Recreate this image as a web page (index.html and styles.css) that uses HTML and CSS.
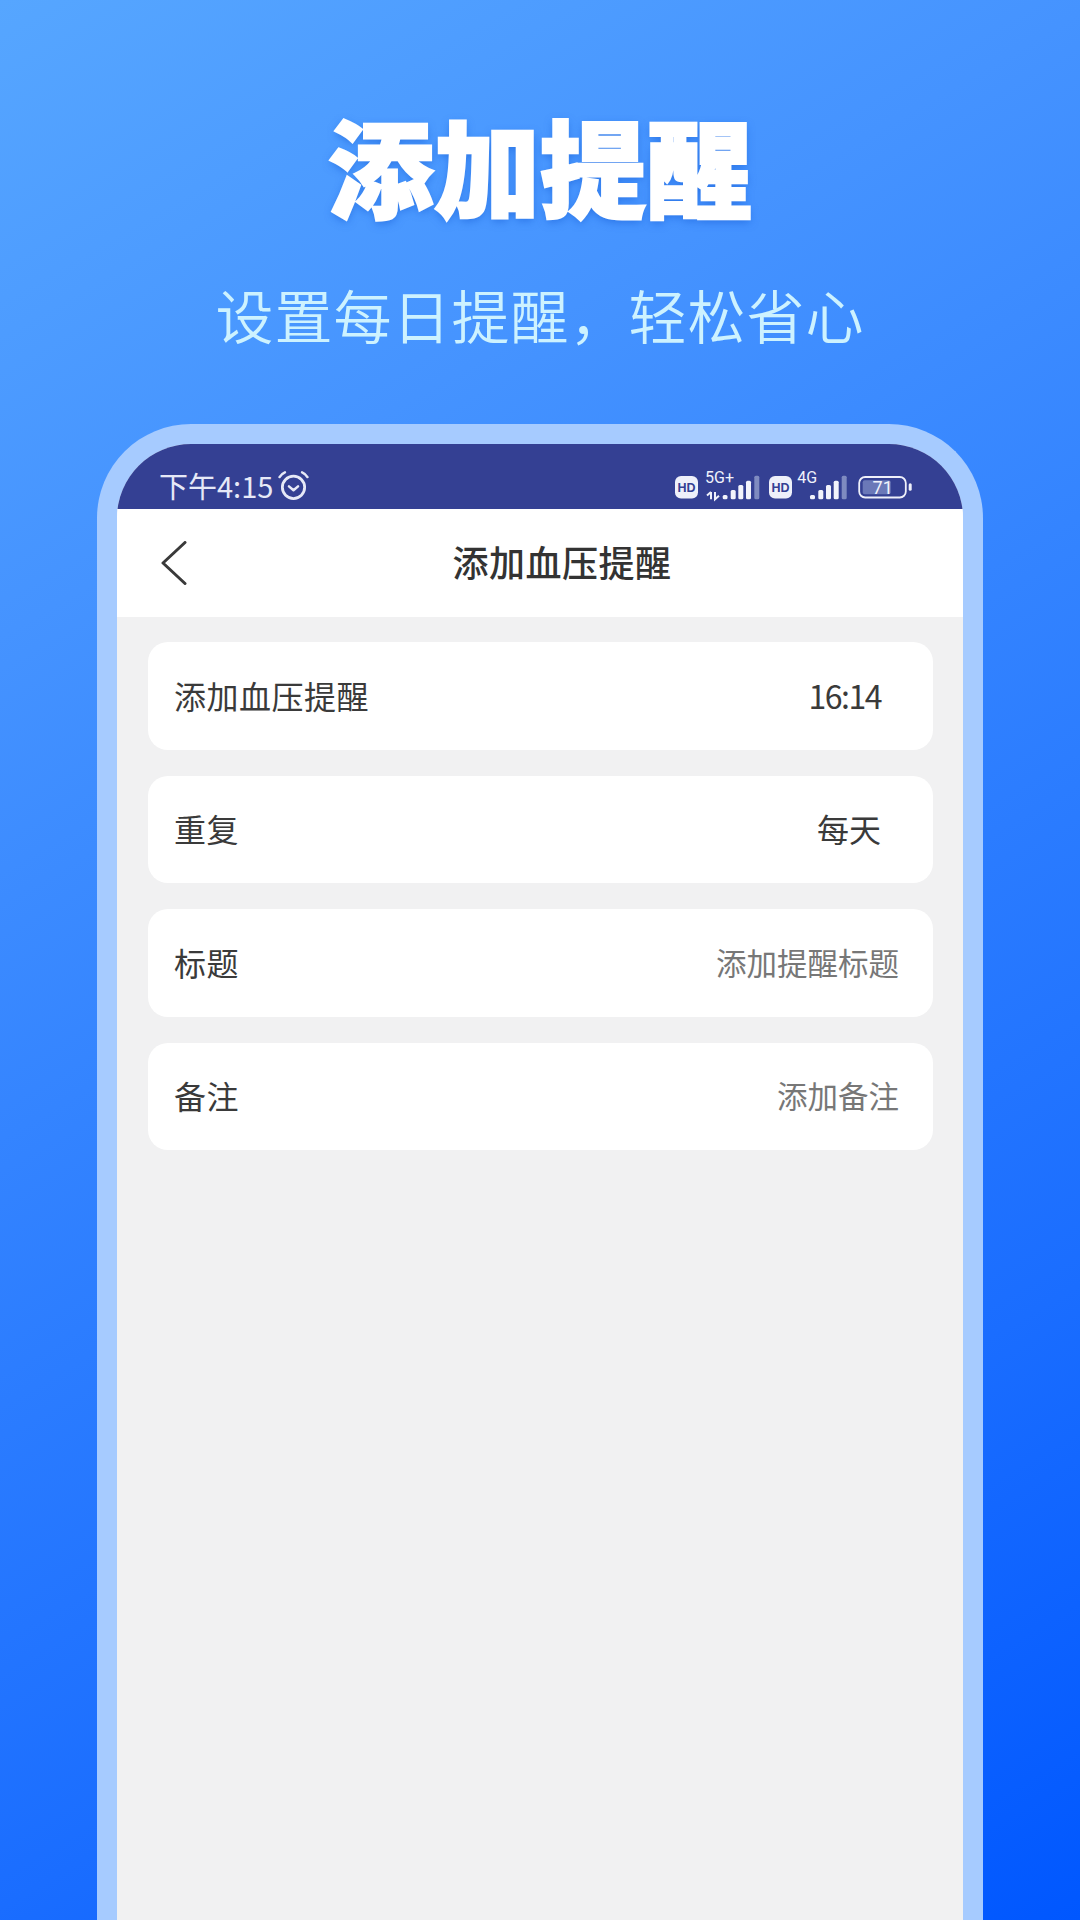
FILE: index.html
```html
<!DOCTYPE html>
<html lang="zh-CN">
<head>
<meta charset="utf-8">
<title>添加提醒</title>
<link rel="stylesheet" href="styles.css">
</head>
<body>
<main class="page">
  <h1 class="headline">添加提醒</h1>
  <p class="tagline">设置每日提醒，轻松省心</p>
  <section class="phone">
    <div class="statusbar">
      <div class="status-left">
        <span class="clock">下午4:15</span>
        <svg class="alarm" viewBox="0 0 30 30" fill="none" stroke="currentColor" stroke-linecap="round" stroke-linejoin="round">
          <circle cx="15" cy="16.800" r="10.800" stroke-width="2.700"/>
          <path d="M10.600 15.800l4.400 3.800 4.400-3.800" stroke-width="2.400"/>
          <path d="M1.500 6.800c1.300-2.200 3-3.600 5.200-4.500M28.500 6.800c-1.300-2.200-3-3.600-5.200-4.500" stroke-width="2.400"/>
        </svg>
      </div>
      <svg class="status-right" viewBox="0 0 240 36">
        <rect x="0" y="8" width="23" height="22.500" rx="6" fill="#eef0fa"/>
        <text x="11.500" y="24" class="hd">HD</text>
        <text x="30" y="15.300" class="net">5G+</text>
        <path d="M36 24v7.300M32 27.500l4-3.500M40 24v7.300l4-3.500" stroke="#eef0fa" stroke-width="2" fill="none"/>
        <g fill="#f2f3fb">
          <rect x="47.700" y="27" width="4.800" height="4.300" rx="1.500"/>
          <rect x="55.700" y="22" width="5" height="9.300" rx="1.500"/>
          <rect x="63.300" y="17" width="5" height="14.300" rx="1.500"/>
          <rect x="71" y="12.700" width="5" height="18.600" rx="1.500"/>
          <rect x="79.300" y="7.700" width="5" height="23.600" rx="1.500" fill="#7f8bc0"/>
        </g>
        <rect x="94" y="8" width="23" height="22.500" rx="6" fill="#eef0fa"/>
        <text x="105.500" y="24" class="hd">HD</text>
        <text x="122.300" y="15.300" class="net">4G</text>
        <g fill="#f2f3fb">
          <rect x="135" y="27" width="5" height="4.300" rx="1.500"/>
          <rect x="143.300" y="22" width="5" height="9.300" rx="1.500"/>
          <rect x="151" y="17" width="5" height="14.300" rx="1.500"/>
          <rect x="158.700" y="12.700" width="5" height="18.600" rx="1.500"/>
          <rect x="166.700" y="7.700" width="5" height="23.600" rx="1.500" fill="#7f8bc0"/>
        </g>
        <rect x="184.200" y="9" width="46.600" height="20.500" rx="6" fill="none" stroke="#eef0fa" stroke-width="1.800"/>
        <rect x="187.700" y="12.300" width="28" height="14" rx="2" fill="#6a78b8"/>
        <text x="207.700" y="25.800" class="batt">71</text>
        <rect x="233.700" y="15.300" width="3" height="7.400" rx="1.500" fill="#eef0fa"/>
      </svg>
    </div>
    <header class="navbar">
      <svg class="back" viewBox="0 0 26 44" fill="none" stroke="#3a3a3a" stroke-width="3" stroke-linecap="round" stroke-linejoin="round">
        <path d="M24 1.500L2 22l22 20.500"/>
      </svg>
      <h2 class="nav-title">添加血压提醒</h2>
    </header>
    <div class="content">
      <div class="row"><span class="label">添加血压提醒</span><span class="value time">16:14</span></div>
      <div class="row"><span class="label">重复</span><span class="value">每天</span></div>
      <div class="row"><span class="label">标题</span><span class="hint">添加提醒标题</span></div>
      <div class="row"><span class="label">备注</span><span class="hint">添加备注</span></div>
    </div>
  </section>
</main>
</body>
</html>
```

FILE: styles.css
```css
* { box-sizing: border-box; }
html, body { margin: 0; padding: 0; }
body {
  width: 1080px;
  height: 1920px;
  overflow: hidden;
  font-family: "Noto Sans CJK SC", "Noto Sans", sans-serif;
}
.page {
  width: 1080px;
  height: 1920px;
  display: flex;
  flex-direction: column;
  align-items: center;
  background: linear-gradient(150deg, #56a6ff 0%, #4593ff 25%, #1a6dff 75%, #0057ff 100%);
  overflow: hidden;
}
.headline {
  margin: 94px 0 0;
  height: 140px;
  line-height: 140px;
  font-size: 106px;
  font-weight: 900;
  color: #fff;
  -webkit-text-stroke: 2.500px #fff;
  text-shadow: 0 3px 8px rgba(20, 90, 210, .55);
}
.tagline {
  margin: 38px 0 0;
  height: 84px;
  line-height: 84px;
  font-size: 58px;
  font-weight: 350;
  letter-spacing: 1px;
  color: #cdf2ff;
}
.phone {
  margin-top: 68px;
  width: 886px;
  flex: 1;
  display: flex;
  flex-direction: column;
  border: 20px solid #a6cbff;
  border-bottom: 0;
  border-radius: 94px 94px 0 0;
  overflow: hidden;
  background: #f1f1f2;
}
.statusbar {
  height: 65px;
  flex: none;
  background: #344093;
  display: flex;
  justify-content: space-between;
  padding: 0 48px 0 42px;
  color: #e6e9f7;
}
.status-left {
  display: flex;
  align-items: center;
  gap: 5px;
  padding-top: 17px;
}
.clock { font-size: 29px; line-height: 36px; }
.alarm { width: 31px; height: 31px; }
.status-right { width: 240px; height: 36px; margin-top: 24px; }
.hd { font: 700 12.500px "Liberation Sans", sans-serif; fill: #344093; text-anchor: middle; }
.net { font: 400 16px Roboto, sans-serif; fill: #f0f2fb; }
.batt { font: 400 18px Roboto, sans-serif; fill: #f0f2fb; text-anchor: middle; }
.navbar {
  height: 108px;
  flex: none;
  position: relative;
  display: flex;
  align-items: center;
  justify-content: center;
  padding-left: 44px;
  background: #fff;
}
.back {
  position: absolute;
  left: 44px;
  top: 32px;
  width: 26px;
  height: 44px;
}
.nav-title {
  margin: 0 0 4px;
  font-size: 36px;
  font-weight: 500;
  letter-spacing: .500px;
  color: #333;
}
.content {
  flex: 1;
  display: flex;
  flex-direction: column;
  gap: 26px;
  padding: 25px 30px 0 31px;
}
.row {
  height: 107.500px;
  flex: none;
  display: flex;
  align-items: center;
  justify-content: space-between;
  padding: 0 34px 2px 26px;
  background: #fff;
  border-radius: 20px;
}
.label { font-size: 32px; letter-spacing: .500px; color: #3a3a3a; }
.value { font-size: 32px; color: #3a3a3a; padding-right: 18px; }
.time { letter-spacing: -1.500px; }
.hint { font-size: 30.500px; color: #777; }
```
